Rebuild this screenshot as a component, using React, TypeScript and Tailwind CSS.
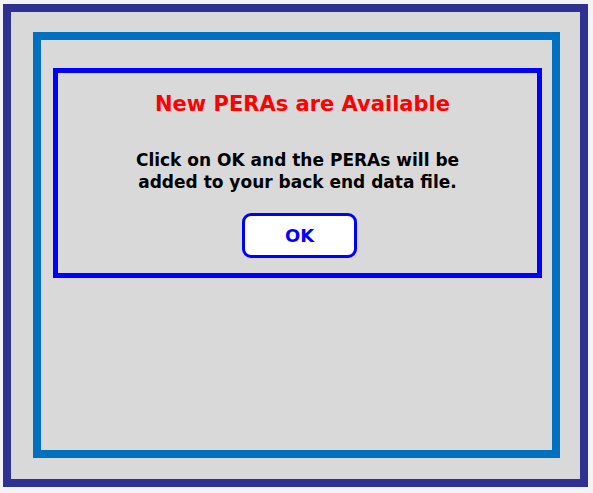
import React from "react";

export default function App() {
  return (
    <div className="w-[593px] h-[493px] bg-[#f3f3f7] pt-[4px] pl-[3px]" style={{ fontFamily: '"DejaVu Sans", Verdana, sans-serif' }}>
      <div className="w-[585px] h-[483px] border-[8px] border-[#2e3192] bg-[#d9d9d9] pt-[20px] pl-[22px]">
        <div className="w-[527px] h-[426px] border-[8px] border-[#0070c0] pt-[28px] pl-[12px]">
          <div className="w-[489px] h-[210px] border-[5px] border-[#0000ff] flex flex-col items-center">
            <div className="mt-[17px] pl-[10px] text-[21px] leading-[29px] font-bold text-[#ff0000]">New PERAs are Available</div>
            <div className="mt-[30px] text-[17px] leading-[22px] font-bold text-black text-center">
              Click on OK and the PERAs will be<br />added to your back end data file.
            </div>
            <div className="mt-[20px] ml-[4px] w-[115px] h-[45px] rounded-[9px] border-[3px] border-[#0000ff] bg-white flex items-center justify-center text-[18px] font-bold text-[#0000ff]">
              OK
            </div>
          </div>
        </div>
      </div>
    </div>
  );
}
